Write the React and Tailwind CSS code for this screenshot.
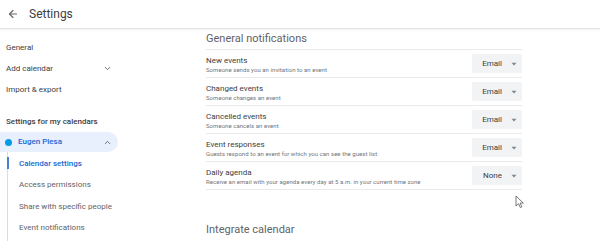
import { ArrowLeft, ChevronDown, ChevronUp } from "lucide-react";

const rows = [
  { title: "New events", sub: "Someone sends you an invitation to an event", value: "Email" },
  { title: "Changed events", sub: "Someone changes an event", value: "Email" },
  { title: "Cancelled events", sub: "Someone cancels an event", value: "Email" },
  { title: "Event responses", sub: "Guests respond to an event for which you can see the guest list", value: "Email" },
  { title: "Daily agenda", sub: "Receive an email with your agenda every day at 5 a.m. in your current time zone", value: "None" },
];

const subItems = ["Access permissions", "Share with specific people", "Event notifications"];

function Caret() {
  return (
    <svg width="6" height="4" viewBox="0 0 6 4">
      <path d="M0.5 0.8h5L3 3.4z" fill="#80868b" />
    </svg>
  );
}

export default function App() {
  return (
    <div className="relative w-[600px] h-[241px] overflow-hidden bg-white text-[#3c4043] font-['Roboto',sans-serif]">
      {/* Top bar */}
      <header className="h-[29px] flex items-center border-b border-[#e3e3e3] shadow-[0_1px_2px_rgba(0,0,0,0.06)]">
        <ArrowLeft className="ml-[7px] w-[12px] h-[12px] text-[#5f6368]" strokeWidth={2.2} />
        <span className="ml-[10px] text-[12px] text-[#3c4043]">Settings</span>
      </header>

      <div className="flex">
        {/* Sidebar */}
        <aside className="w-[190px] shrink-0 pt-[8px] text-[8px]">
          <div className="h-[21px] flex items-center pl-[6px]">General</div>
          <div className="h-[21px] flex items-center pl-[6px] w-[118px] justify-between pr-[6px]">
            <span>Add calendar</span>
            <ChevronDown className="w-[9px] h-[9px] text-[#5f6368]" strokeWidth={2.4} />
          </div>
          <div className="h-[21px] flex items-center pl-[6px]">Import &amp; export</div>

          <div className="mt-[11px] h-[21px] flex items-center pl-[6px] font-medium">Settings for my calendars</div>

          <div className="h-[20px] w-[118px] flex items-center justify-between rounded-r-full bg-[#e8f0fe] pl-[5px] pr-[6px]">
            <div className="flex items-center gap-[6px]">
              <span className="w-[7px] h-[7px] rounded-full bg-[#039be5]" />
              <span className="font-medium text-[#1967d2]">Eugen Plesa</span>
            </div>
            <ChevronUp className="w-[9px] h-[9px] text-[#5f6368]" strokeWidth={2.4} />
          </div>

          <div className="ml-[7px] pt-[1px] border-l border-[#dadce0]">
            <div className="relative h-[21.5px] flex items-center pl-[11px] font-medium text-[#1967d2]">
              <span className="absolute left-[-1px] top-[4px] h-[12px] w-[2px] bg-[#4a7fd6]" />
              Calendar settings
            </div>
            {subItems.map((s) => (
              <div key={s} className="h-[21.5px] flex items-center pl-[11px] text-[#5f6368]">
                {s}
              </div>
            ))}
            <div className="h-[10px]" />
          </div>
        </aside>

        {/* Content */}
        <main className="pl-[16px] w-[332px]">
          <h2 className="h-[21px] flex items-center text-[11px] text-[#5f6368] border-b border-[#ebebeb]">
            General notifications
          </h2>
          {rows.map((r) => (
            <div key={r.title} className="h-[28px] flex items-center justify-between border-b border-[#ebebeb]">
              <div className="leading-none pt-[3px]">
                <div className="text-[8px] text-[#3c4043]">{r.title}</div>
                <div className="mt-[1.5px] text-[6px] text-[#70757a] tracking-[0.05px]">{r.sub}</div>
              </div>
              <div className="w-[50px] h-[19px] rounded-[2px] bg-[#f1f3f4] flex items-center justify-end pr-[5px] gap-[9px]">
                <span className="text-[8px] text-[#3c4043]">{r.value}</span>
                <Caret />
              </div>
            </div>
          ))}
          <h2 className="mt-[32px] text-[11px] text-[#5f6368]">Integrate calendar</h2>
        </main>
      </div>

      {/* Mouse cursor */}
      <svg className="absolute left-[515px] top-[195px]" width="9" height="13" viewBox="0 0 9 13">
        <path d="M1 1v10l2.5-2.3 1.8 3.8 1.6-.7-1.8-3.7H8.3z" fill="#fff" stroke="#555" strokeWidth="0.8" strokeLinejoin="round" />
      </svg>
    </div>
  );
}
